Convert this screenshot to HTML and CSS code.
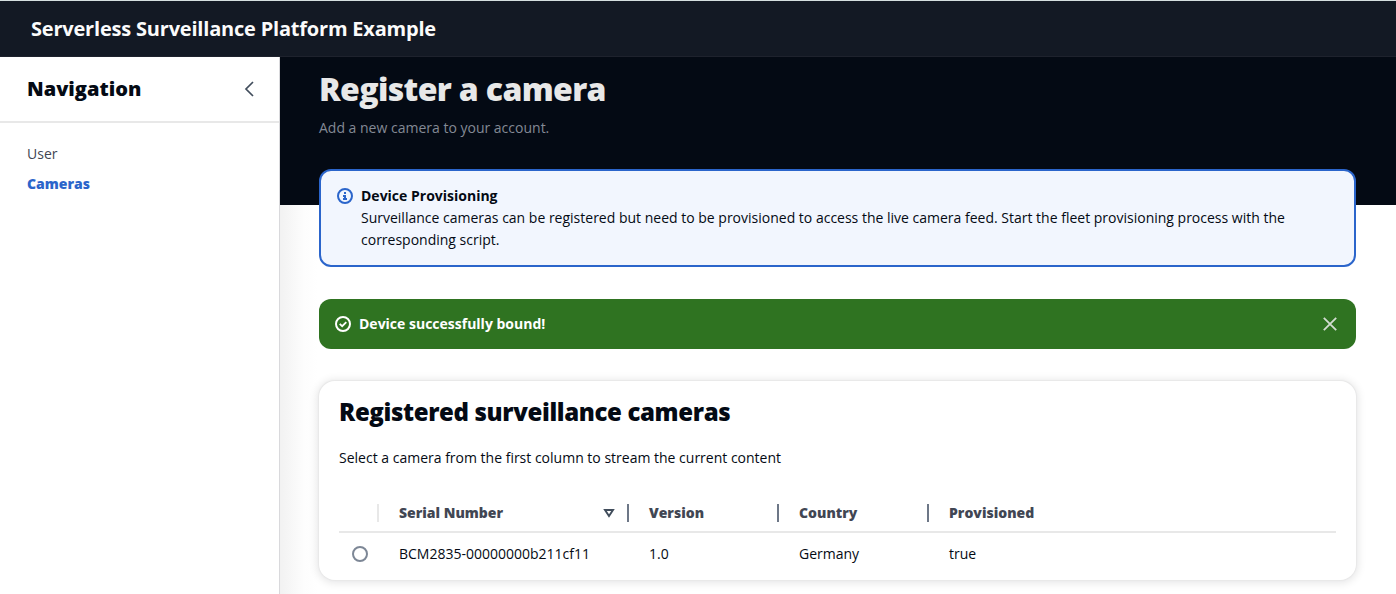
FILE: index.html
```html
<!DOCTYPE html>
<html lang="en">
<head>
<meta charset="utf-8">
<title>Serverless Surveillance Platform Example</title>
<link rel="stylesheet" href="styles.css">
</head>
<body>
<header class="top-bar"><span class="top-title">Serverless Surveillance Platform Example</span></header>
<div class="layout">
  <nav class="side">
    <div class="side-head">
      <h2 class="side-title">Navigation</h2>
      <svg class="icon" viewBox="0 0 16 16"><path d="M12 1 5 8l7 7" fill="none" stroke="#414d5c" stroke-width="1.7"/></svg>
    </div>
    <ul class="side-list">
      <li>User</li>
      <li class="active">Cameras</li>
    </ul>
  </nav>
  <main class="main">
    <div class="hero">
      <h1 class="page-title">Register a camera</h1>
      <p class="page-sub">Add a new camera to your account.</p>
    </div>
    <div class="content">
      <section class="alert">
        <svg class="icon" viewBox="0 0 16 16"><circle cx="8" cy="8" r="7" fill="none" stroke="#2b65cb" stroke-width="2"/><path d="M7 4h2v2H7zM6 7h3v3h1v2H6v-2h1V9H6z" fill="#2b65cb"/></svg>
        <div>
          <div class="alert-title">Device Provisioning</div>
          <div class="alert-text">Surveillance cameras can be registered but need to be provisioned to access the live camera feed. Start the fleet provisioning process with the corresponding script.</div>
        </div>
      </section>
      <section class="flash">
        <svg class="icon" viewBox="0 0 16 16"><circle cx="8" cy="8" r="7" fill="none" stroke="#fff" stroke-width="2"/><path d="m4.7 7.8 2.5 2.4 4.1-4.1" fill="none" stroke="#fff" stroke-width="1.8"/></svg>
        <span class="flash-text">Device successfully bound!</span>
        <svg class="icon" viewBox="0 0 16 16"><path d="m1.8 1.8 12.4 12.4M14.2 1.8 1.8 14.2" fill="none" stroke="#d3dcd2" stroke-width="1.8"/></svg>
      </section>
      <section class="card">
        <h2 class="card-title">Registered surveillance cameras</h2>
        <p class="card-text">Select a camera from the first column to stream the current content</p>
        <div class="row head">
          <div class="cell pick"></div>
          <div class="cell serial"><span>Serial Number</span><svg class="sort" viewBox="0 0 16 16"><path d="M4 5h8l-4 6z" fill="none" stroke="#414d5c" stroke-width="1.9"/></svg></div>
          <div class="cell">Version</div>
          <div class="cell">Country</div>
          <div class="cell last">Provisioned</div>
        </div>
        <div class="row">
          <div class="cell pick"><span class="radio"></span></div>
          <div class="cell">BCM2835-00000000b211cf11</div>
          <div class="cell">1.0</div>
          <div class="cell">Germany</div>
          <div class="cell">true</div>
        </div>
      </section>
    </div>
  </main>
</div>
</body>
</html>
```
FILE: styles.css
```css
* { box-sizing: border-box; }
body {
  margin: 0;
  height: 594px;
  overflow: hidden;
  display: flex;
  flex-direction: column;
  background: #fff;
  color: #040a14;
  font: 14px/22px "Open Sans", sans-serif;
}
h1, h2, p, ul { margin: 0; padding: 0; }
.icon { display: block; flex: none; width: 16px; height: 16px; }
.top-bar {
  flex: none;
  height: 57px;
  padding: 0 31px;
  display: flex;
  align-items: center;
  background: #131924;
  border-top: 1px solid #d5dfdf;
  border-bottom: 1px solid #1e222d;
}
.top-title {
  color: #fbfbfb;
  font-size: 20px;
  font-weight: 700;
  line-height: 24px;
  letter-spacing: -.2px;
}
.layout { flex: 1; display: flex; min-height: 0; }
.side {
  flex: none;
  width: 280px;
  border-right: 1px solid #d9d9dc;
  background: #fff;
}
.side-head {
  height: 66px;
  padding: 0 22px 0 27px;
  display: flex;
  align-items: center;
  justify-content: space-between;
  border-bottom: 2px solid #e8e8e8;
}
.side-title { font-size: 20px; font-weight: 800; line-height: 24px; }
.side-list { list-style: none; padding: 20px 27px; color: #414653; }
.side-list li { margin-bottom: 8px; }
.side-list .active { color: #2b65cb; font-weight: 800; }
.main {
  flex: 1;
  min-width: 0;
  background: linear-gradient(90deg, #f2f2f2, #fdfdfd 24px, #fff 38px);
}
.hero { height: 148px; padding: 12px 39px; background: #040a14; }
.page-title {
  color: #e8e8e8;
  font-size: 32px;
  font-weight: 800;
  line-height: 40px;
  letter-spacing: -.64px;
}
.page-sub { margin-top: 8px; color: #838995; }
.content { margin-top: -36px; padding: 0 40px 0 39px; }
.alert {
  height: 98px;
  display: flex;
  gap: 8px;
  padding: 14px 16px;
  border: 2px solid #2b65cb;
  border-radius: 12px;
  background: #f2f6fe;
}
.alert .icon { margin-top: 3px; }
.alert-title { font-weight: 700; }
.flash {
  height: 50px;
  margin-top: 32px;
  padding: 0 18px 0 16px;
  display: flex;
  align-items: center;
  gap: 8px;
  border-radius: 12px;
  background: #2f7321;
  color: #fff;
}
.flash-text { flex: 1; font-weight: 700; }
.card {
  height: 199px;
  margin-top: 32px;
  padding: 16px 20px;
  border-radius: 16px;
  background: #fff;
  box-shadow: 0 0 1px 1px #e8e8e8, 0 1px 8px 2px rgba(0, 7, 22, .1);
}
.card-title {
  font-size: 24px;
  font-weight: 800;
  line-height: 30px;
  letter-spacing: -.36px;
}
.card-text { margin-top: 20px; }
.row {
  display: grid;
  grid-template-columns: 40px 250px 150px 150px 1fr;
  height: 42px;
  align-items: center;
}
.row.head {
  margin-top: 24px;
  height: 40px;
  padding-top: 2px;
  color: #414653;
  font-weight: 800;
  border-bottom: 2px solid #e8e8e8;
}
.cell { padding-left: 20px; }
.head .cell { height: 18px; line-height: 18px; border-right: 2px solid #6d7787; }
.head .pick { border-color: #e8e8e8; }
.head .last { border: 0; }
.serial { display: flex; align-items: center; justify-content: space-between; padding-right: 10px; }
.pick { padding-left: 13px; }
.sort { width: 16px; height: 16px; }
.radio { display: block; width: 16px; height: 16px; border: 2px solid #7d8796; border-radius: 50%; }
```
